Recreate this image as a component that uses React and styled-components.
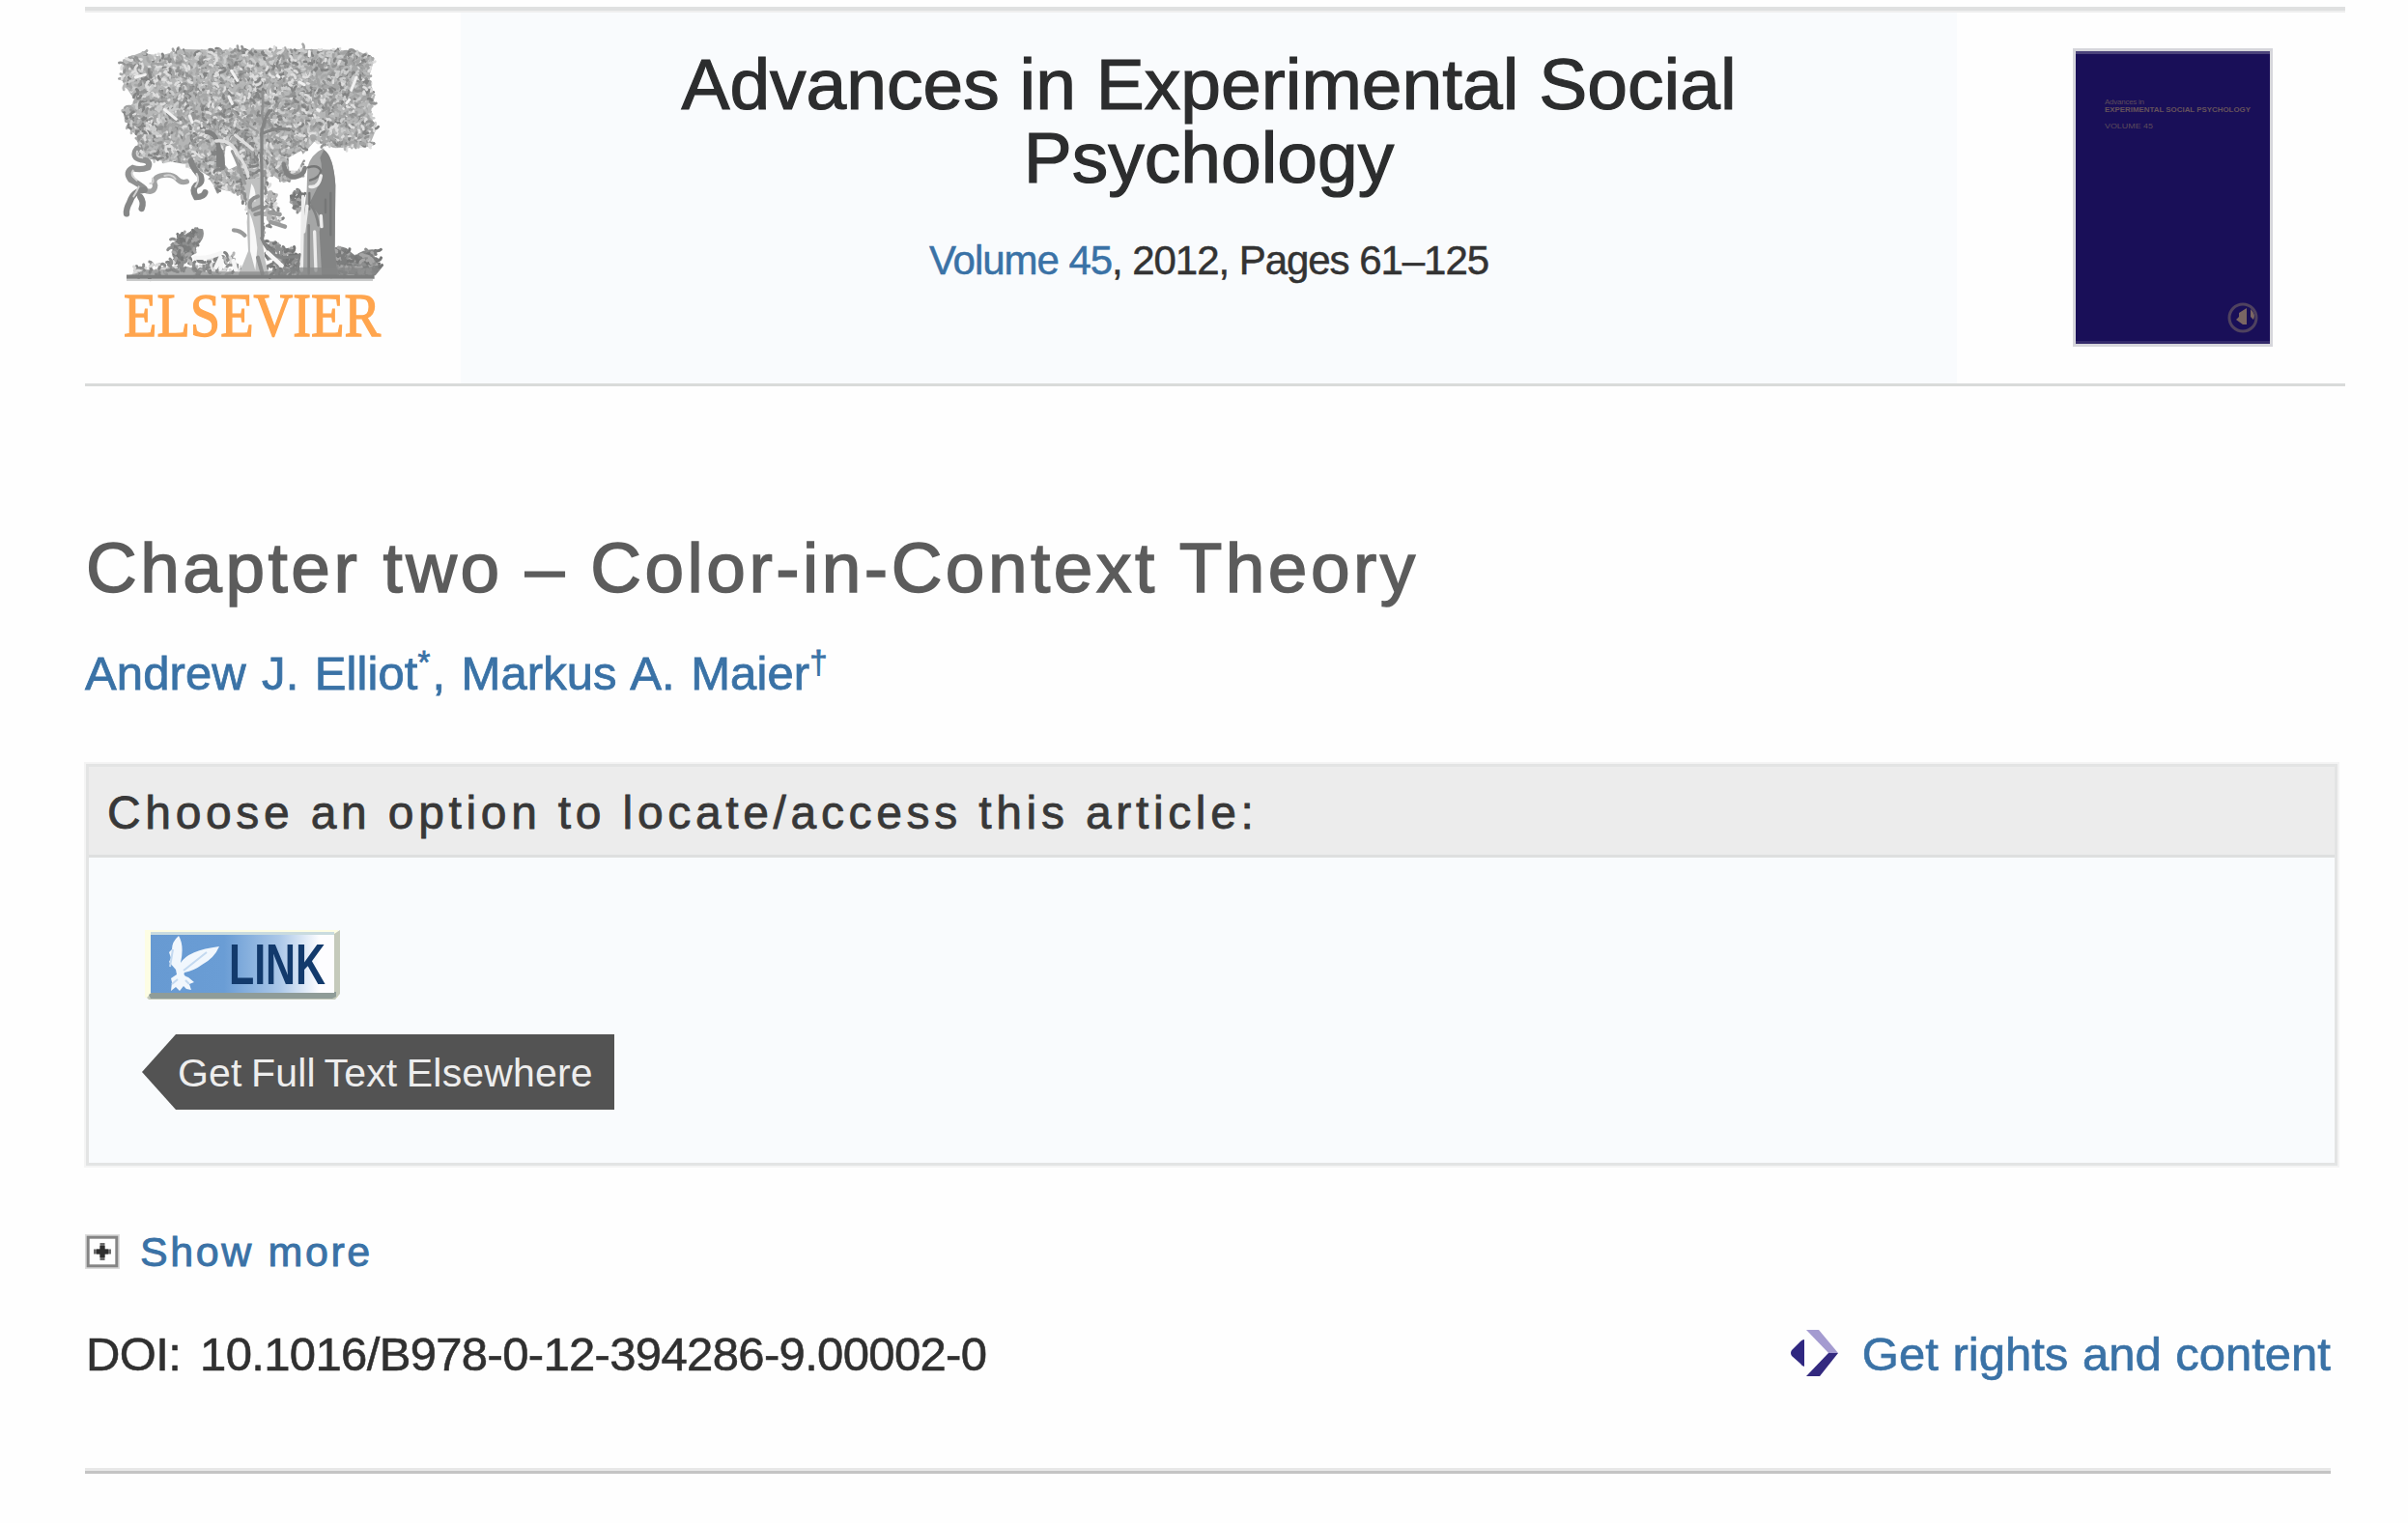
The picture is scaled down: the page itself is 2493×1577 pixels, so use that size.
import React from "react";
import styled, { createGlobalStyle } from "styled-components";

const GlobalStyle = createGlobalStyle`
  html, body { margin: 0; padding: 0; background: #fefefe; }
  body { font-family: "Liberation Sans", Arial, Helvetica, sans-serif; color: #2e2e2e; }
`;

const Page = styled.main`
  box-sizing: border-box;
  width: 2493px;
  height: 1577px;
  padding: 7px 0 0 88px;
  overflow: hidden;
`;

const JournalHeader = styled.header`
  box-sizing: border-box;
  display: grid;
  grid-template-columns: 389px 1549px 402px;
  width: 2340px;
  height: 393px;
  border-top: 4px solid #dfe0e0;
  border-bottom: 3px solid #d9dbda;
  box-shadow: inset 0 2px 0 #efefef;
`;

const LogoCell = styled.div`
  padding: 34px 0 0 34px;
`;

const JournalInfo = styled.div`
  margin-top: 2px;
  padding-top: 36px;
  background: #f9fbfd;
  text-align: center;
`;

const JournalTitle = styled.h1`
  width: 1200px;
  margin: 0 auto;
  font-size: 75px;
  line-height: 76px;
  font-weight: 400;
  color: #2c2d2e;
  -webkit-text-stroke: 1.2px #2c2d2e;
`;

const Issue = styled.p`
  margin: 44px 0 0;
  font-size: 42px;
  line-height: 50px;
  letter-spacing: -1.05px;
  color: #333;
  -webkit-text-stroke: 0.5px currentColor;
`;

const Link = styled.a`
  color: #3a72a6;
  text-decoration: none;
`;

const CoverCell = styled.div`
  padding: 39px 0 0 120px;
`;

const ChapterTitle = styled.h2`
  margin: 148px 0 0 1px;
  font-size: 73px;
  line-height: 80px;
  font-weight: 400;
  letter-spacing: 3.5px;
  word-spacing: -0.5px;
  color: #5c5c5c;
  -webkit-text-stroke: 1.5px #5c5c5c;
`;

const Authors = styled.p`
  margin: 39px 0 0;
  font-size: 49px;
  line-height: 60px;
  letter-spacing: 0.1px;
  word-spacing: 2.6px;
  color: #3a72a6;
  -webkit-text-stroke: 0.8px #3a72a6;
`;

const Note = styled.sup`
  margin-right: ${(p) => p.$gap || 0}px;
  font-size: 33px;
  line-height: 0;
  vertical-align: 17px;
`;

const Panel = styled.section`
  box-sizing: border-box;
  width: 2331px;
  height: 416px;
  margin: 64px 0 0 1px;
  border: 3px solid #e3e4e4;
  box-shadow: 0 0 0 2px #f4f4f4;
  background: #f9fbfd;
`;

const PanelHeading = styled.h3`
  margin: 0;
  padding: 4px 0 0 19px;
  font-size: 48px;
  line-height: 87px;
  font-weight: 400;
  letter-spacing: 4.65px;
  word-spacing: -0.6px;
  color: #383838;
  -webkit-text-stroke: 0.8px #383838;
  background: #ececec;
  border-bottom: 3px solid #dedfdf;
`;

const Options = styled.div`
  display: flex;
  flex-direction: column;
  align-items: flex-start;
  gap: 35px;
  padding: 75px 0 0 55px;
`;

const LinkBadge = styled.a`
  display: block;
  width: 203px;
  height: 73px;
  margin-left: 3px;
`;

const ElsewhereButton = styled.a`
  box-sizing: border-box;
  width: 489px;
  height: 78px;
  padding-left: 37px;
  background: #535353;
  clip-path: polygon(0 50%, 35px 0, 100% 0, 100% 100%, 35px 100%);
  font-size: 41px;
  line-height: 80px;
  letter-spacing: 0.15px;
  word-spacing: -2px;
  white-space: nowrap;
  color: #ededed;
`;

const ShowMore = styled.a`
  display: flex;
  align-items: center;
  gap: 21px;
  height: 50px;
  margin-top: 64px;
  font-size: 43px;
  line-height: 50px;
  letter-spacing: 2.6px;
  color: #3a72a6;
  -webkit-text-stroke: 0.9px #3a72a6;
`;

const Footer = styled.footer`
  box-sizing: border-box;
  display: flex;
  justify-content: space-between;
  width: 2325px;
  height: 153px;
  margin-top: 52px;
  border-bottom: 3px solid #c4c4c4;
  box-shadow: inset 0 -3px 0 #e8e8e8;
  font-size: 49px;
  line-height: 59px;
`;

const Doi = styled.span`
  letter-spacing: -0.65px;
  word-spacing: 7px;
  margin-left: 1px;
  color: #303030;
  -webkit-text-stroke: 0.6px #303030;
`;

const Rights = styled.a`
  display: flex;
  align-items: flex-start;
  gap: 25px;
  word-spacing: 1px;
  color: #3a72a6;
  -webkit-text-stroke: 0.7px #3a72a6;
`;

const RightsIcon = styled.svg`
  margin-top: 4px;
`;

const Drawing = styled.svg`
  display: block;
  overflow: visible;
`;

/* Engraved foliage: short strokes scattered inside the outline of the crown. */
const CROWN = [
  [140, 185], [200, 162], [250, 175], [330, 153], [480, 156], [600, 153], [740, 153], [870, 158],
  [922, 182], [905, 240], [923, 300], [910, 350], [926, 405], [905, 456], [800, 460], [735, 440],
  [700, 480], [690, 550], [640, 568], [600, 540], [560, 600], [500, 600], [430, 585], [400, 545],
  [330, 515], [240, 495], [180, 485], [190, 430], [158, 395], [142, 345], [180, 315], [140, 255],
];

const TUFTS = [
  { shape: [[290, 785], [305, 735], [365, 710], [390, 730], [365, 785], [320, 825]], count: 110, dark: true },
  { shape: [[170, 855], [185, 825], [300, 815], [420, 800], [480, 795], [520, 850]], count: 130 },
  { shape: [[575, 850], [590, 745], [645, 765], [695, 800], [695, 850]], count: 120, dark: true },
  { shape: [[775, 850], [795, 775], [835, 775], [870, 800], [925, 775], [935, 835], [915, 850]], count: 190, dark: true },
  { shape: [[590, 565], [615, 610], [640, 695], [590, 705], [578, 620]], count: 55 },
  { shape: [[500, 600], [565, 605], [585, 720], [568, 755], [530, 650]], count: 80 },
  { shape: [[660, 595], [705, 595], [695, 650], [668, 645]], count: 35, dark: true },
];

function inside([x, y], shape) {
  let hit = false;
  for (let i = 0, j = shape.length - 1; i < shape.length; j = i++) {
    const [xi, yi] = shape[i];
    const [xj, yj] = shape[j];
    if (yi > y !== yj > y && x < ((xj - xi) * (y - yi)) / (yj - yi) + xi) hit = !hit;
  }
  return hit;
}

function createRandom(seed) {
  let s = seed;
  return () => {
    s = (s * 1664525 + 1013904223) % 4294967296;
    return s / 4294967296;
  };
}

function scatter(shape, count, tones, length, seed) {
  const random = createRandom(seed);
  const xs = shape.map((p) => p[0]);
  const ys = shape.map((p) => p[1]);
  const x0 = Math.min(...xs);
  const y0 = Math.min(...ys);
  const w = Math.max(...xs) - x0;
  const h = Math.max(...ys) - y0;
  const strokes = [];
  for (let tries = 0; strokes.length < count && tries < count * 6; tries++) {
    const x = x0 + random() * w;
    const y = y0 + random() * h;
    const angle = random() * Math.PI * 2;
    const l = length * (0.5 + random());
    const tone = tones[Math.floor(random() * tones.length)];
    if (!inside([x, y], shape)) continue;
    const dx = Math.cos(angle) * l;
    const dy = Math.sin(angle) * l;
    strokes.push({
      tone,
      d: `M${x.toFixed(1)} ${y.toFixed(1)}q${(dx * 0.6 - dy * 0.3).toFixed(1)} ${(dy * 0.6 + dx * 0.3).toFixed(1)} ${dx.toFixed(1)} ${dy.toFixed(1)}`,
    });
  }
  return strokes;
}

const toPoints = (shape) => shape.map((p) => p.join(",")).join(" ");

const crownStrokes = scatter(CROWN, 3600, ["#a2a3a3", "#cbcccc", "#a6a7a7", "#838484", "#b7b8b8", "#dedede", "#939494"], 12, 7);
const tuftStrokes = TUFTS.flatMap((t, i) =>
  scatter(t.shape, t.count, t.dark ? ["#7c7d7d", "#8d8e8e", "#757676", "#a5a5a5"] : ["#8d8e8e", "#b5b5b5", "#838484", "#dadada"], 12, 31 + i)
);

function ElsevierLogo() {
  return (
    <Drawing width="278.3" height="325" viewBox="125 135 835 975" fill="none" strokeLinecap="round">
      <polygon points={toPoints(CROWN)} fill="#b4b5b5" />
      {crownStrokes.map((s, i) => (
        <path key={i} d={s.d} stroke={s.tone} strokeWidth="8" />
      ))}
      <g fill="#fefefe">
        <path d="M228 520l60-18 46 8 8 32-30-8-46-2-24 18z" />
        <path d="M460 455q22-10 32 10l2 50-24 12-16-20z" />
        <path d="M655 490l40-22 10 22-22 40-26 0z" />
        <path d="M362 520l50 30-10 8-44-22z" />
      </g>
      <g stroke="#f1f1f1" strokeWidth="9">
        <path d="M478 220l18 30M270 340l36 30M348 360l8 20M470 300l10 22M850 280l16-40M836 320l8-10M720 160v14M690 255l14 8M620 235l6 4M180 240l30-8M440 335l4 4M745 340l6 3" />
      </g>
      <g stroke="#909191" strokeWidth="19">
        <path d="M185 462q-20 26 14 34q30 2 20 24q-24 10-48 2q-24 12-6 36q30 16 42 28" />
        <path d="M205 590q34 14 36-14q-10-22 16-30q36-8 52 10q12 14 30 8" stroke="#a1a2a2" strokeWidth="16" />
        <path d="M352 500q10 30 30 46q8 22-14 30q-14 14 0 36q24 0 28-14" stroke="#848585" />
        <path d="M208 590q-36 4-46 38q-12 22-10 36M195 612q12 16 4 36" stroke="#868787" />
      </g>
      <g stroke="#d2d2d2" strokeWidth="6">
        <path d="M185 470q-6 18 16 20M172 530q-10 14 12 30M225 570q14 0 8-16M270 546q22-8 34 10M370 540q10 20-4 40M190 580q-6 14-16 30" />
      </g>
      <path d="M295 790q-6-40 30-56q44-30 64-22q10 24-16 50q-20 40-50 62q-20-6-28-34z" fill="#8e8f8f" />
      <path d="M785 850l4-76q20-12 44-4l30 24q30-24 66-18l-8 20 24 36-20 24z" fill="#858686" />
      {tuftStrokes.map((s, i) => (
        <path key={i} d={s.d} stroke={s.tone} strokeWidth="9" />
      ))}
      <path d="M510 560q24 50 16 130l4 90-30 75 95 5-14-60-8-60 4-120 4-70z" fill="#bfc0c0" />
      <path d="M540 570q16 20 12 56l-20-8zM534 660q18 40 24 110l-6 70-16-60z" fill="#f8f8f8" />
      <path d="M560 610q-30 10-24 34M572 640l-28 12M574 660l-22 6M560 800l14 50" stroke="#8f9090" strokeWidth="12" />
      <path d="M574 285q4 40-2 70l6 20" stroke="#8f9090" strokeWidth="8" />
      <g stroke="#838484" strokeWidth="10">
        <path d="M570 480q4 60 2 130l2 130" />
        <path d="M570 420q8-50 26-76M574 415q44-22 84-12M572 400v80M572 740q20 50 60 60l60-4" />
        <path d="M560 410q-50-30-80-70" stroke="#9d9e9e" strokeWidth="7" />
      </g>
      <path d="M400 410q28 0 38 44v60M440 462q14 22 10 60M640 510q10 44 36 40q26-4 30-28" stroke="#808181" strokeWidth="14" />
      <path d="M430 438q46-6 66 40q26 30 34 70M490 420l54 44" stroke="#dedede" strokeWidth="10" />
      <path d="M480 470q20 40 40 100" stroke="#9a9b9b" strokeWidth="9" />
      <path d="M485 715q20 0 34 16M600 690l44 14M596 660l32 6" stroke="#999a9a" strokeWidth="13" />
      <path d="M765 465q30 20 36 110l-2 200 10 85H690l12-190 10-80 2-70q10-40 51-60z" fill="#a5a6a6" />
      <path d="M765 465q30 20 36 110l-2 200 10 85h-50l-8-140 8-40-38-50 30-60q14-40 2-80z" fill="#838484" />
      <path d="M716 520q30-10 40 10M722 560q30-8 34-30M720 600v50M786 600v130M770 620v40" stroke="#757676" strokeWidth="7" />
      <path d="M722 580q28 4 34-34M700 610l-4 230M713 640l-10 80M736 720l4 120M756 670l2 34" stroke="#ececec" strokeWidth="10" />
      <path d="M718 700v150M748 700q-6-40-22-60M690 790l-6 40" stroke="#808181" strokeWidth="8" />
      <path d="M365 800q40 4 80-14M430 830l14-30M444 834l4-24M492 840l-8-30M590 785l44 40" stroke="#f6f6f6" strokeWidth="13" />
      <path d="M180 850l30-12 70 0 60-10 60 16h180l100-14 130 2h80l46-8-10 30H160z" fill="#858686" opacity=".7" />
      <path d="M152 860h770" stroke="#7d7e7e" strokeWidth="13" strokeLinecap="butt" />
      <path d="M152 870h765" stroke="#c9caca" strokeWidth="6" strokeLinecap="butt" />
      <text
        x="143"
        y="1045"
        fill="#ffa54e"
        stroke="#ffa54e"
        strokeWidth="4"
        fontFamily="'Liberation Serif', 'Times New Roman', serif"
        fontSize="188"
        textLength="798"
        lengthAdjust="spacingAndGlyphs"
      >
        ELSEVIER
      </text>
    </Drawing>
  );
}

function JournalCover() {
  return (
    <Drawing width="207" height="309" viewBox="0 0 207 309" fontFamily="'Liberation Sans', Arial, sans-serif">
      <rect width="207" height="309" fill="#d6d6db" />
      <rect x="3" y="3" width="201" height="303" fill="#190f58" />
      <rect x="3" y="3" width="201" height="3" fill="#4b437b" />
      <rect x="3" y="303" width="201" height="3" fill="#332a6a" />
      <g fill="#5d4c5c" fontSize="8">
        <text x="33" y="58" textLength="41">Advances in</text>
        <text x="33" y="66" fontWeight="700" fill="#65525b" textLength="151" lengthAdjust="spacingAndGlyphs">
          EXPERIMENTAL SOCIAL PSYCHOLOGY
        </text>
        <text x="33" y="83" textLength="50" lengthAdjust="spacingAndGlyphs">VOLUME 45</text>
      </g>
      <circle cx="176" cy="279" r="14" fill="none" stroke="#4f425f" strokeWidth="3" />
      <path d="M180 269v17h-4l-7-5 3-3v-4zM184 270q6 6 3 11l-3-3z" fill="#7a6663" />
    </Drawing>
  );
}

function LinkImage() {
  return (
    <Drawing width="203" height="73" viewBox="0 0 203 73">
      <defs>
        <linearGradient id="sky" x1="0" x2="1">
          <stop offset="0" stopColor="#679ad2" />
          <stop offset=".4" stopColor="#6a9dd5" />
          <stop offset=".7" stopColor="#aac7e8" />
          <stop offset=".92" stopColor="#fdfdff" />
        </linearGradient>
      </defs>
      <rect width="200" height="70" fill="#fdfde4" />
      <path d="M2 70l6-6h186l2-60 6-4v66l-5 6H4z" fill="#c5cabb" />
      <path d="M4 67l4-3h190v5l-4 2H6z" fill="#8f9c98" />
      <rect x="6" y="3" width="190" height="62" fill="url(#sky)" />
      <rect x="6" y="2" width="190" height="3" fill="#c9dbdf" />
      <path
        d="M35 6q6 10 2 28q8-13 40-17q-5 12-18 19q-8 6-18 8q-2 3 4 5l6 5-5 2 2 6-5-1-3-3-4 5-4-4-5 4 1-9-1-4 6-4-1-5-7-8 2-4-2-6 3-3q0-8 7-14z"
        fill="#f1f7fd"
      />
      <path d="M29 20l-3 18M64 23L40 42M34 51l-6 5M42 52l4 4" stroke="#c3d9f0" strokeWidth="2" fill="none" />
      <text
        x="87"
        y="56"
        fill="#123a6c"
        fontFamily="'Liberation Sans', Arial, sans-serif"
        fontWeight="700"
        fontSize="60"
        textLength="100"
        lengthAdjust="spacingAndGlyphs"
      >
        LINK
      </text>
    </Drawing>
  );
}

function ExpandIcon() {
  return (
    <svg width="36" height="36" viewBox="0 0 36 36" fill="none">
      <rect x="1" y="1" width="34" height="34" stroke="#dcdcdc" strokeWidth="2" />
      <rect x="3.2" y="3.2" width="29.6" height="29.6" stroke="#858585" strokeWidth="3" />
      <path d="M9 18h18M18 9v18" stroke="#6b6b6b" strokeWidth="5" />
      <path d="M12 18h12M18 12v12" stroke="#2e2e2e" strokeWidth="5" />
    </svg>
  );
}

export default function App() {
  return (
    <>
      <GlobalStyle />
      <Page>
        <JournalHeader>
          <LogoCell>
            <ElsevierLogo />
          </LogoCell>
          <JournalInfo>
            <JournalTitle>Advances in Experimental Social Psychology</JournalTitle>
            <Issue>
              <Link>Volume 45</Link>, 2012, Pages 61–125
            </Issue>
          </JournalInfo>
          <CoverCell>
            <JournalCover />
          </CoverCell>
        </JournalHeader>

        <ChapterTitle>Chapter two – Color-in-Context Theory</ChapterTitle>
        <Authors>
          Andrew J. Elliot<Note $gap={2}>*</Note>, Markus A. Maier<Note>†</Note>
        </Authors>

        <Panel>
          <PanelHeading>Choose an option to locate/access this article:</PanelHeading>
          <Options>
            <LinkBadge>
              <LinkImage />
            </LinkBadge>
            <ElsewhereButton>Get Full Text Elsewhere</ElsewhereButton>
          </Options>
        </Panel>

        <ShowMore>
          <ExpandIcon />
          Show more
        </ShowMore>

        <Footer>
          <Doi>DOI: 10.1016/B978-0-12-394286-9.00002-0</Doi>
          <Rights>
            <RightsIcon width="50" height="48" viewBox="0 0 50 48">
              <path d="M15 10v28q-2 0-4-3L2 27q-2-3 0-6l9-9q2-2 4-2z" fill="#2f2780" />
              <path d="M17 0h13l20 24-7 3z" fill="#a49bd0" />
              <path d="M50 24L31 48H17l23-24z" fill="#33297f" />
            </RightsIcon>
            Get rights and content
          </Rights>
        </Footer>
      </Page>
    </>
  );
}
